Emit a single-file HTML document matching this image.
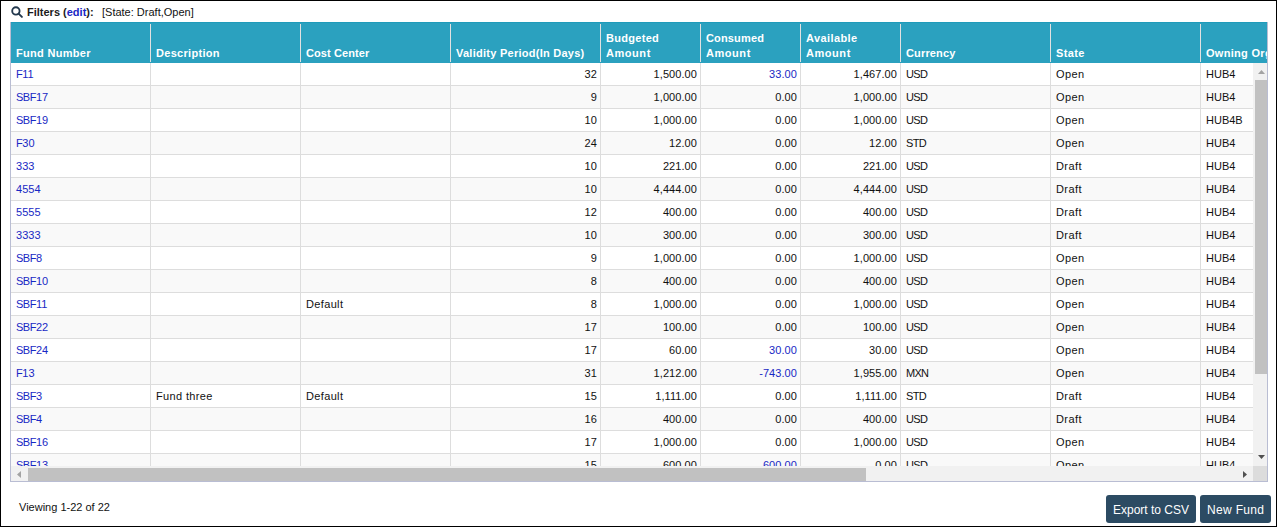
<!DOCTYPE html>
<html lang="en">
<head>
<meta charset="utf-8">
<title>Funds</title>
<style>
html,body{margin:0;padding:0;}
body{width:1277px;height:527px;position:relative;overflow:hidden;background:#fff;font-family:"Liberation Sans",sans-serif;font-size:11px;color:#111;}
a{color:#1828c4;text-decoration:none;}
.frame{position:absolute;left:0;top:0;width:1277px;height:527px;box-sizing:border-box;border:1px solid #000;z-index:10;pointer-events:none;}
.filters{position:absolute;left:0;top:0;height:22px;width:600px;line-height:14px;white-space:nowrap;}
.mag{position:absolute;left:11px;top:6.3px;}
.ft{position:absolute;left:27px;top:5px;color:#1b1b1b;letter-spacing:0;}
.fv{position:absolute;left:102px;top:5px;color:#111;letter-spacing:0;}
.grid{position:absolute;left:10px;top:22px;width:1258px;height:460px;box-sizing:border-box;border:1px solid #b9bdd3;border-top:0;overflow:hidden;}
.ghead{position:absolute;left:0;top:0;width:1256px;height:41px;background:#2ba1bf;border-top:1px solid #1f9bba;box-sizing:border-box;overflow:hidden;}
table{border-collapse:separate;border-spacing:0;table-layout:fixed;width:1340px;}
.ht th{height:40px;padding:0;position:relative;text-align:left;vertical-align:bottom;color:#fff;font-weight:bold;font-size:11px;line-height:15px;white-space:nowrap;box-sizing:border-box;}
.ht th span{display:block;padding:0 0 2px 5px;letter-spacing:0.3px;}
.h0 span{letter-spacing:.3px !important}.h2 span{letter-spacing:.1px !important}.h3 span{letter-spacing:.26px !important}.h4 span{letter-spacing:.3px !important}.h5 span{letter-spacing:.15px !important}.h6 span{letter-spacing:.4px !important}.h7 span{letter-spacing:.15px !important}.h8 span{letter-spacing:.35px !important}
.ht th i{font-style:normal;letter-spacing:.55px;}
.ht th .sep{position:absolute;right:0;top:1px;width:1px;height:38px;background:#e3e1e1;}
.gbody{position:absolute;left:0;top:41px;width:1242px;height:403px;overflow:hidden;background:#fff;}
.bt td{height:23px;box-sizing:border-box;padding:0 4px 0 5px;border-right:1px solid #ddd;border-bottom:1px solid #ddd;line-height:22px;white-space:nowrap;overflow:hidden;color:#111;letter-spacing:0;}
.bt tr:nth-child(even) td{background:#f9f9f9;}
.bt td.r{text-align:right;padding:0 3px 0 0;}
.vsb{position:absolute;left:1242px;top:41px;width:14px;height:403px;background:#f1f1f1;}
.vthumb{position:absolute;left:2px;top:17px;width:12px;height:294px;background:#c1c1c1;}
.vup{position:absolute;left:5px;top:7px;width:7px;height:4px;background:#a3a3a3;clip-path:polygon(50% 0,100% 100%,0 100%);}
.vdn{position:absolute;left:5px;top:392px;width:7px;height:4px;background:#505050;clip-path:polygon(0 0,100% 0,50% 100%);}
.hsb{position:absolute;left:0;top:444px;width:1242px;height:15px;background:#f1f1f1;}
.hthumb{position:absolute;left:17px;top:2px;width:838px;height:13px;background:#c1c1c1;}
.hl{position:absolute;left:6px;top:5px;width:4px;height:7px;background:#a3a3a3;clip-path:polygon(100% 0,100% 100%,0 50%);}
.hr{position:absolute;left:1232px;top:5px;width:4px;height:7px;background:#505050;clip-path:polygon(0 0,100% 50%,0 100%);}
.corner{position:absolute;left:1242px;top:444px;width:14px;height:15px;background:#dcdcdc;}
.viewing{position:absolute;left:19px;top:499px;line-height:16px;color:#111;letter-spacing:0;}
.btn{position:absolute;top:495px;height:28px;box-sizing:border-box;background:#2c4b63;color:#fff;border-radius:3px;font-size:12px;line-height:30px;text-align:center;white-space:nowrap;letter-spacing:0;}
.b1{left:1106px;width:90px;}
.b2{left:1200px;width:71px;letter-spacing:.3px;text-indent:.3px;}
.bt td.c0 i{font-style:normal;letter-spacing:-0.5px;}
.bt td.c0{letter-spacing:0.05px;}
.bt td.r{letter-spacing:0.07px;}
.bt td.c7{letter-spacing:-0.7px;}
.bt td.c8{letter-spacing:0.4px;}
.bt td.c1{letter-spacing:0.35px;}
.bt td.c2{letter-spacing:0.35px;}
</style>
</head>
<body>
<div class="frame"></div>
<div class="filters"><svg class="mag" viewBox="0 0 12 12" width="12" height="12"><circle cx="4.9" cy="4.9" r="3.7" fill="none" stroke="#22384d" stroke-width="1.85"/><line x1="7.6" y1="7.6" x2="10.9" y2="10.9" stroke="#22384d" stroke-width="1.9" stroke-linecap="round"/></svg><span class="ft"><b>Filters (<a href="#">edit</a>):</b></span><span class="fv">[State: Draft,Open]</span></div>
<div class="grid">
<div class="ghead">
<table class="ht"><colgroup><col style="width:140px"><col style="width:150px"><col style="width:150px"><col style="width:150px"><col style="width:100px"><col style="width:100px"><col style="width:100px"><col style="width:150px"><col style="width:150px"><col style="width:150px"></colgroup>
<tr><th class="h0"><div class="sep"></div><span>Fund Number</span></th><th class="h1"><div class="sep"></div><span>Description</span></th><th class="h2"><div class="sep"></div><span>Cost Center</span></th><th class="h3"><div class="sep"></div><span>Validity Period(In Days)</span></th><th class="h4"><div class="sep"></div><span>Budgeted<br><i>Amount</i></span></th><th class="h5"><div class="sep"></div><span>Consumed<br><i>Amount</i></span></th><th class="h6"><div class="sep"></div><span>Available<br><i>Amount</i></span></th><th class="h7"><div class="sep"></div><span>Currency</span></th><th class="h8"><div class="sep"></div><span>State</span></th><th class="h9"><div class="sep"></div><span>Owning Org</span></th></tr></table>
</div>
<div class="gbody">
<table class="bt"><colgroup><col style="width:140px"><col style="width:150px"><col style="width:150px"><col style="width:150px"><col style="width:100px"><col style="width:100px"><col style="width:100px"><col style="width:150px"><col style="width:150px"><col style="width:150px"></colgroup>
<tr><td class="l c0"><a href="#"><i>F</i>11</a></td><td class="l c1"></td><td class="l c2"></td><td class="r c3">32</td><td class="r c4">1,500.00</td><td class="r c5"><a href="#">33.00</a></td><td class="r c6">1,467.00</td><td class="l c7">USD</td><td class="l c8">Open</td><td class="l c9">HUB4</td></tr>
<tr><td class="l c0"><a href="#"><i>SBF</i>17</a></td><td class="l c1"></td><td class="l c2"></td><td class="r c3">9</td><td class="r c4">1,000.00</td><td class="r c5">0.00</td><td class="r c6">1,000.00</td><td class="l c7">USD</td><td class="l c8">Open</td><td class="l c9">HUB4</td></tr>
<tr><td class="l c0"><a href="#"><i>SBF</i>19</a></td><td class="l c1"></td><td class="l c2"></td><td class="r c3">10</td><td class="r c4">1,000.00</td><td class="r c5">0.00</td><td class="r c6">1,000.00</td><td class="l c7">USD</td><td class="l c8">Open</td><td class="l c9">HUB4B</td></tr>
<tr><td class="l c0"><a href="#"><i>F</i>30</a></td><td class="l c1"></td><td class="l c2"></td><td class="r c3">24</td><td class="r c4">12.00</td><td class="r c5">0.00</td><td class="r c6">12.00</td><td class="l c7">STD</td><td class="l c8">Open</td><td class="l c9">HUB4</td></tr>
<tr><td class="l c0"><a href="#">333</a></td><td class="l c1"></td><td class="l c2"></td><td class="r c3">10</td><td class="r c4">221.00</td><td class="r c5">0.00</td><td class="r c6">221.00</td><td class="l c7">USD</td><td class="l c8">Draft</td><td class="l c9">HUB4</td></tr>
<tr><td class="l c0"><a href="#">4554</a></td><td class="l c1"></td><td class="l c2"></td><td class="r c3">10</td><td class="r c4">4,444.00</td><td class="r c5">0.00</td><td class="r c6">4,444.00</td><td class="l c7">USD</td><td class="l c8">Draft</td><td class="l c9">HUB4</td></tr>
<tr><td class="l c0"><a href="#">5555</a></td><td class="l c1"></td><td class="l c2"></td><td class="r c3">12</td><td class="r c4">400.00</td><td class="r c5">0.00</td><td class="r c6">400.00</td><td class="l c7">USD</td><td class="l c8">Draft</td><td class="l c9">HUB4</td></tr>
<tr><td class="l c0"><a href="#">3333</a></td><td class="l c1"></td><td class="l c2"></td><td class="r c3">10</td><td class="r c4">300.00</td><td class="r c5">0.00</td><td class="r c6">300.00</td><td class="l c7">USD</td><td class="l c8">Draft</td><td class="l c9">HUB4</td></tr>
<tr><td class="l c0"><a href="#"><i>SBF</i>8</a></td><td class="l c1"></td><td class="l c2"></td><td class="r c3">9</td><td class="r c4">1,000.00</td><td class="r c5">0.00</td><td class="r c6">1,000.00</td><td class="l c7">USD</td><td class="l c8">Open</td><td class="l c9">HUB4</td></tr>
<tr><td class="l c0"><a href="#"><i>SBF</i>10</a></td><td class="l c1"></td><td class="l c2"></td><td class="r c3">8</td><td class="r c4">400.00</td><td class="r c5">0.00</td><td class="r c6">400.00</td><td class="l c7">USD</td><td class="l c8">Open</td><td class="l c9">HUB4</td></tr>
<tr><td class="l c0"><a href="#"><i>SBF</i>11</a></td><td class="l c1"></td><td class="l c2">Default</td><td class="r c3">8</td><td class="r c4">1,000.00</td><td class="r c5">0.00</td><td class="r c6">1,000.00</td><td class="l c7">USD</td><td class="l c8">Open</td><td class="l c9">HUB4</td></tr>
<tr><td class="l c0"><a href="#"><i>SBF</i>22</a></td><td class="l c1"></td><td class="l c2"></td><td class="r c3">17</td><td class="r c4">100.00</td><td class="r c5">0.00</td><td class="r c6">100.00</td><td class="l c7">USD</td><td class="l c8">Open</td><td class="l c9">HUB4</td></tr>
<tr><td class="l c0"><a href="#"><i>SBF</i>24</a></td><td class="l c1"></td><td class="l c2"></td><td class="r c3">17</td><td class="r c4">60.00</td><td class="r c5"><a href="#">30.00</a></td><td class="r c6">30.00</td><td class="l c7">USD</td><td class="l c8">Open</td><td class="l c9">HUB4</td></tr>
<tr><td class="l c0"><a href="#"><i>F</i>13</a></td><td class="l c1"></td><td class="l c2"></td><td class="r c3">31</td><td class="r c4">1,212.00</td><td class="r c5"><a href="#">-743.00</a></td><td class="r c6">1,955.00</td><td class="l c7">MXN</td><td class="l c8">Open</td><td class="l c9">HUB4</td></tr>
<tr><td class="l c0"><a href="#"><i>SBF</i>3</a></td><td class="l c1">Fund three</td><td class="l c2">Default</td><td class="r c3">15</td><td class="r c4">1,111.00</td><td class="r c5">0.00</td><td class="r c6">1,111.00</td><td class="l c7">STD</td><td class="l c8">Draft</td><td class="l c9">HUB4</td></tr>
<tr><td class="l c0"><a href="#"><i>SBF</i>4</a></td><td class="l c1"></td><td class="l c2"></td><td class="r c3">16</td><td class="r c4">400.00</td><td class="r c5">0.00</td><td class="r c6">400.00</td><td class="l c7">USD</td><td class="l c8">Draft</td><td class="l c9">HUB4</td></tr>
<tr><td class="l c0"><a href="#"><i>SBF</i>16</a></td><td class="l c1"></td><td class="l c2"></td><td class="r c3">17</td><td class="r c4">1,000.00</td><td class="r c5">0.00</td><td class="r c6">1,000.00</td><td class="l c7">USD</td><td class="l c8">Open</td><td class="l c9">HUB4</td></tr>
<tr><td class="l c0"><a href="#"><i>SBF</i>13</a></td><td class="l c1"></td><td class="l c2"></td><td class="r c3">15</td><td class="r c4">600.00</td><td class="r c5"><a href="#">600.00</a></td><td class="r c6">0.00</td><td class="l c7">USD</td><td class="l c8">Open</td><td class="l c9">HUB4</td></tr>
</table>
</div>
<div class="vsb"><div class="vup"></div><div class="vthumb"></div><div class="vdn"></div></div>
<div class="hsb"><div class="hl"></div><div class="hthumb"></div><div class="hr"></div></div>
<div class="corner"></div>
</div>
<div class="viewing">Viewing 1-22 of 22</div>
<div class="btn b1">Export to CSV</div><div class="btn b2">New Fund</div>
</body>
</html>
